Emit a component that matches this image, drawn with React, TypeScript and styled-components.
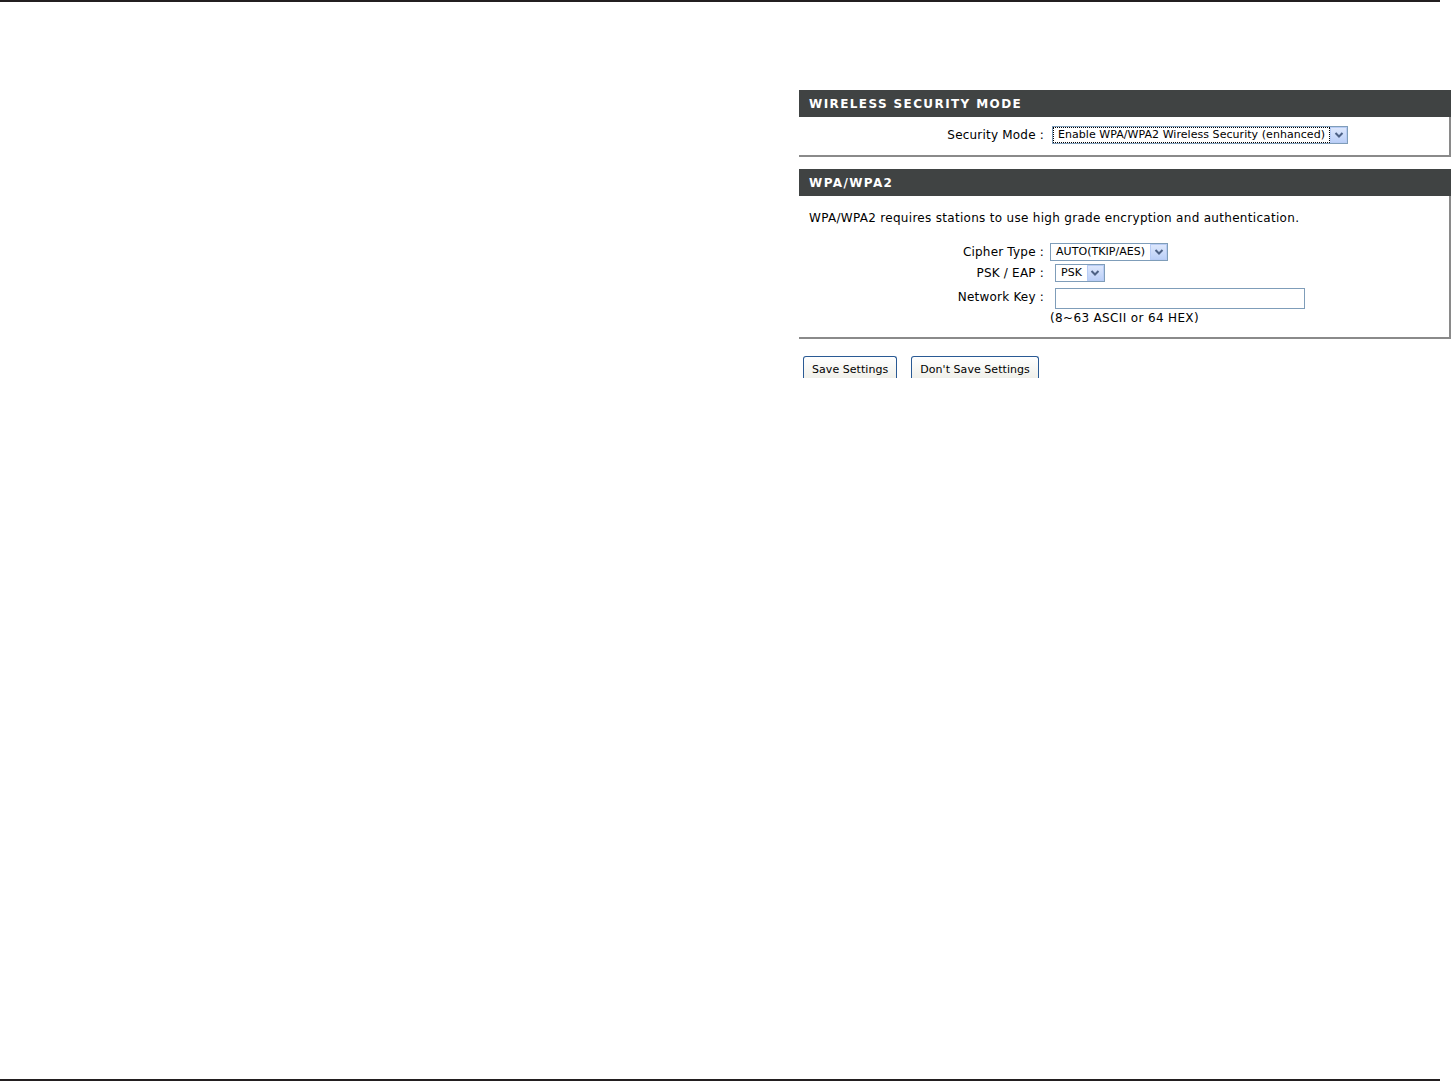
import styled, { createGlobalStyle } from "styled-components";

const GlobalStyle = createGlobalStyle`
  html, body {
    margin: 0;
    padding: 0;
    background: #fff;
  }
  body {
    font-family: "DejaVu Sans", Verdana, sans-serif;
    color: #000;
  }
`;

const Page = styled.div`
  height: 1081px;
  display: flex;
  flex-direction: column;
`;

const Rule = styled.div`
  width: 1440px;
  height: 2px;
  background: #231f20;
  flex-shrink: 0;
`;

const Content = styled.div`
  flex: 1;
  padding: 88px 0 0 799px;
`;

const Panel = styled.section<{ $gap?: number }>`
  width: 652px;
  margin-bottom: ${(p) => p.$gap ?? 0}px;
`;

const Header = styled.h2`
  margin: 0;
  height: 27px;
  padding: 1px 0 0 10px;
  box-sizing: border-box;
  display: flex;
  align-items: center;
  background: #404343;
  color: #fff;
  font-family: "DejaVu Sans", Verdana, sans-serif;
  font-size: 12px;
  font-weight: bold;
  letter-spacing: 1.4px;
`;

const Body = styled.div<{ $pad: string }>`
  padding: ${(p) => p.$pad};
  border-right: 2px solid #8a8a8a;
  border-bottom: 2px solid #8a8a8a;
  font-size: 12px;
`;

const Intro = styled.p`
  margin: 0 0 18px 10px;
  font-size: 12px;
  letter-spacing: 0.3px;
`;

const Form = styled.div`
  display: grid;
  grid-template-columns: 245px 1fr;
  column-gap: 6px;
  row-gap: 3px;
  align-items: center;
`;

const Label = styled.span`
  text-align: right;
  font-size: 12px;
  letter-spacing: 0.2px;
  white-space: nowrap;
`;

const Field = styled.div<{ $shift?: number }>`
  display: flex;
  padding-left: ${(p) => p.$shift ?? 0}px;
`;

const Select = styled.div`
  display: inline-flex;
  align-items: center;
  height: 18px;
  border: 1px solid #7f9db9;
  background: #fff;
  box-sizing: border-box;
  font-size: 11px;
  letter-spacing: 0.05px;
`;

const Value = styled.span<{ $focus?: boolean }>`
  padding: 0 4px;
  height: 14px;
  line-height: 14px;
  margin: 0 1px;
  white-space: nowrap;
  outline: ${(p) => (p.$focus ? "1px dotted #000" : "none")};
`;

const Arrow = styled.span`
  width: 17px;
  height: 16px;
  box-sizing: border-box;
  border: 1px solid #b8ccf5;
  background: linear-gradient(#dde7fc, #bcd0f8);
  display: flex;
  align-items: center;
  justify-content: center;
`;

const Input = styled.div`
  width: 250px;
  height: 21px;
  box-sizing: border-box;
  border: 1px solid #7f9db9;
  background: #fff;
  margin: 3px 0 0;
`;

const Hint = styled.span`
  grid-column: 2;
  font-size: 12px;
  letter-spacing: 0.35px;
  margin-top: -1px;
`;

const Buttons = styled.div`
  display: flex;
  gap: 14px;
  padding: 17px 0 0 4px;
`;

const Button = styled.button`
  height: 22px;
  padding: 3px 8px 0;
  border: 1px solid #2a5a94;
  border-bottom: none;
  border-radius: 3px 3px 0 0;
  background: linear-gradient(#ffffff, #f0f0ea);
  font-family: "DejaVu Sans", Verdana, sans-serif;
  font-size: 11px;
  letter-spacing: 0.05px;
  color: #000;
`;

const Chevron = () => (
  <svg width="10" height="8" viewBox="0 0 10 8">
    <path d="M1.5 2 L5 5.5 L8.5 2" fill="none" stroke="#4d6185" strokeWidth="2" />
  </svg>
);

const Dropdown = ({ value, focus }: { value: string; focus?: boolean }) => (
  <Select>
    <Value $focus={focus}>{value}</Value>
    <Arrow>
      <Chevron />
    </Arrow>
  </Select>
);

export default function App() {
  return (
    <>
      <GlobalStyle />
      <Page>
        <Rule />
        <Content>
          <Panel $gap={12}>
            <Header>WIRELESS SECURITY MODE</Header>
            <Body $pad="9px 0 11px">
              <Form>
                <Label>Security Mode :</Label>
                <Field $shift={2}>
                  <Dropdown value="Enable WPA/WPA2 Wireless Security (enhanced)" focus />
                </Field>
              </Form>
            </Body>
          </Panel>
          <Panel>
            <Header>WPA/WPA2</Header>
            <Body $pad="15px 0 12px">
              <Intro>WPA/WPA2 requires stations to use high grade encryption and authentication.</Intro>
              <Form>
                <Label>Cipher Type :</Label>
                <Field>
                  <Dropdown value="AUTO(TKIP/AES) " />
                </Field>
                <Label>PSK / EAP :</Label>
                <Field $shift={5}>
                  <Dropdown value="PSK" />
                </Field>
                <Label>Network Key :</Label>
                <Field $shift={5}>
                  <Input />
                </Field>
                <Hint>(8~63 ASCII or 64 HEX)</Hint>
              </Form>
            </Body>
          </Panel>
          <Buttons>
            <Button>Save Settings</Button>
            <Button>Don't Save Settings</Button>
          </Buttons>
        </Content>
        <Rule />
      </Page>
    </>
  );
}
